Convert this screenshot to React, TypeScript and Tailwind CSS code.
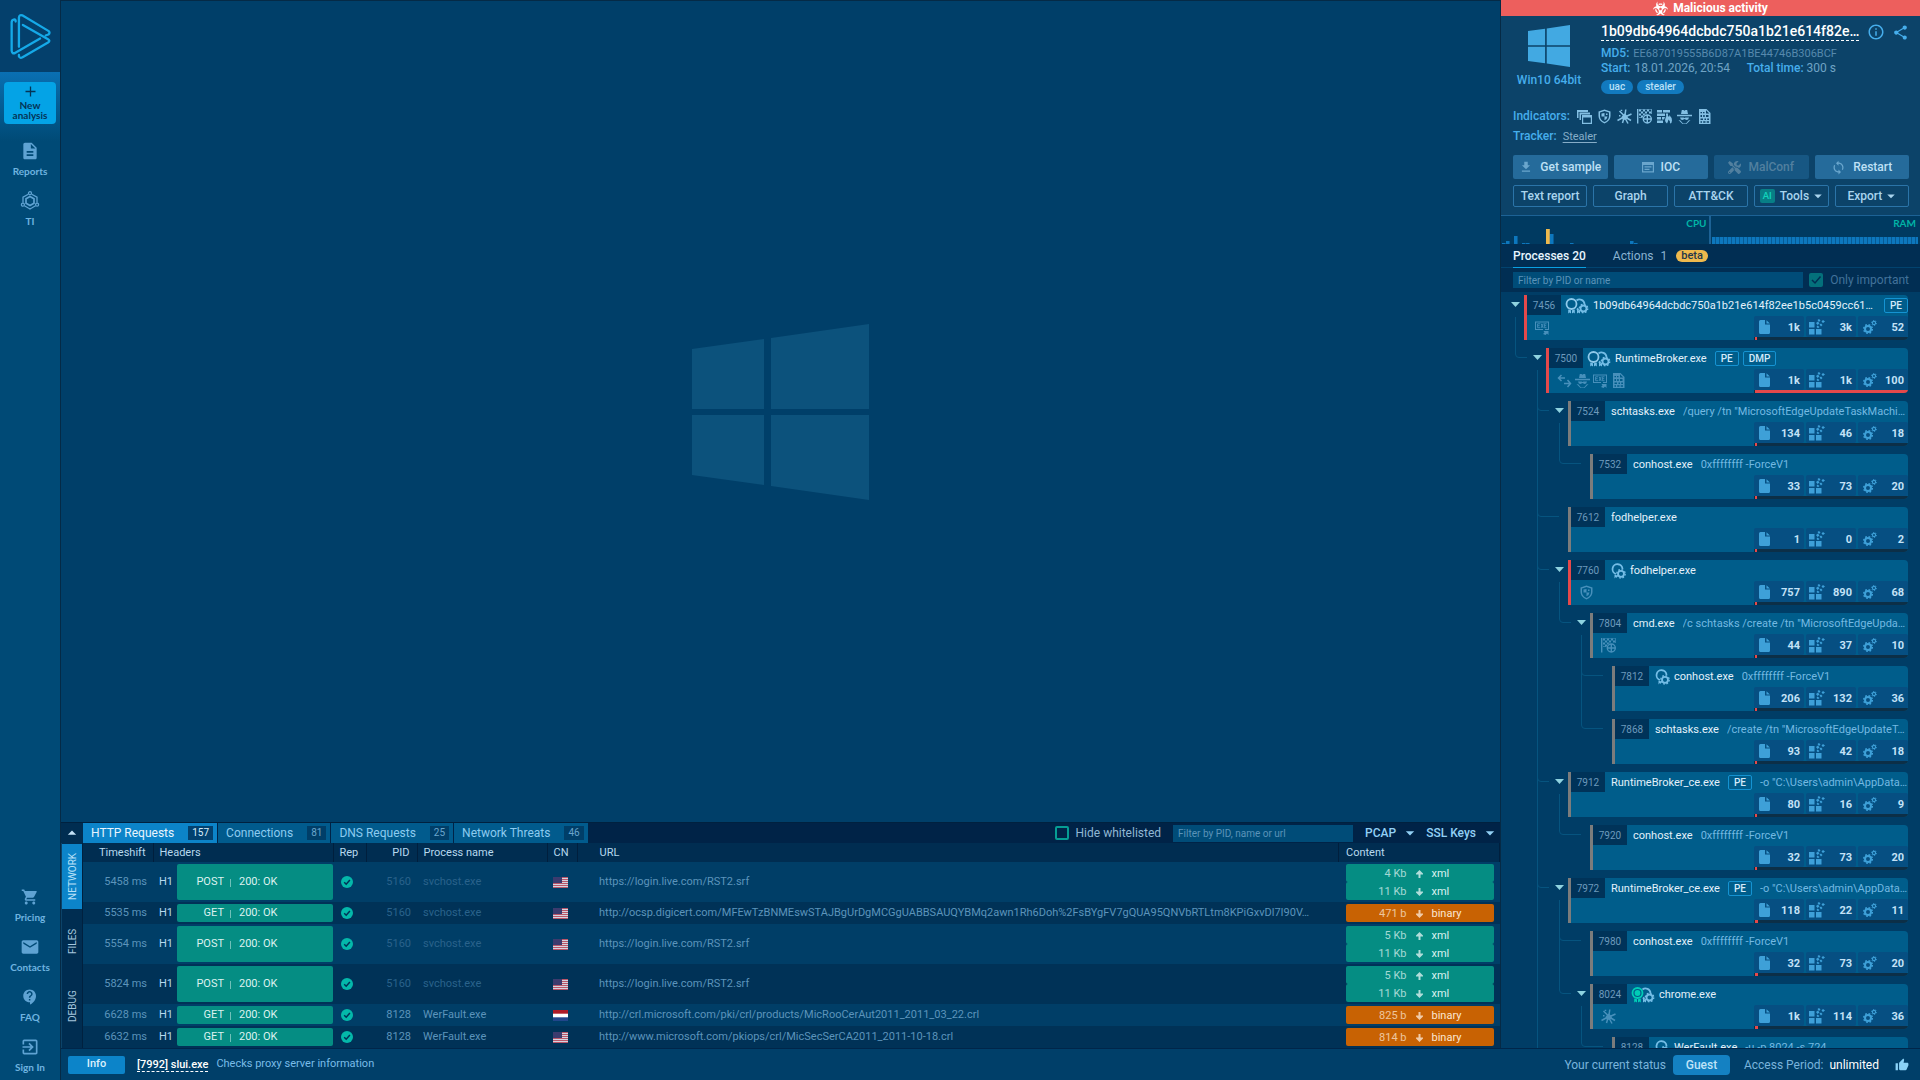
import type { ReactNode } from 'react';
import {
  MdArrowDropDown,
  MdArrowDropUp,
  MdContactSupport,
  MdDescription,
  MdEmail,
  MdExitToApp,
  MdFileDownload,
  MdInfoOutline,
  MdShare,
  MdShoppingCart,
  MdSync,
  MdThumbUp,
} from 'react-icons/md';
import { FaBiohazard, FaTools } from 'react-icons/fa';

type Guide = 'blank' | 'line' | 'tee' | 'end';
type Indicator = 'exe' | 'net' | 'spy' | 'doc' | 'shield' | 'task' | 'crash';

interface Process {
  pid: number;
  name: string;
  guides: Guide[];
  stats: [string, string, string];
  load: number;
  open?: boolean;
  danger?: boolean;
  badge?: 'gear' | 'cert' | 'trusted';
  tags?: string[];
  args?: string;
  indicators?: Indicator[];
}

const processes: Process[] = [
  { pid: 7456, name: '1b09db64964dcbdc750a1b21e614f82ee1b5c0459cc61…', guides: [], stats: ['1k', '3k', '52'], load: 1, open: true, danger: true, badge: 'cert', tags: ['PE'], indicators: ['exe'] },
  { pid: 7500, name: 'RuntimeBroker.exe', guides: ['end'], stats: ['1k', '1k', '100'], load: 100, open: true, danger: true, badge: 'cert', tags: ['PE', 'DMP'], indicators: ['net', 'spy', 'exe', 'doc'] },
  { pid: 7524, name: 'schtasks.exe', guides: ['blank', 'tee'], stats: ['134', '46', '18'], load: 1, open: true, args: '/query /tn "MicrosoftEdgeUpdateTaskMachi…' },
  { pid: 7532, name: 'conhost.exe', guides: ['blank', 'line', 'end'], stats: ['33', '73', '20'], load: 1, args: '0xffffffff -ForceV1' },
  { pid: 7612, name: 'fodhelper.exe', guides: ['blank', 'tee'], stats: ['1', '0', '2'], load: 1 },
  { pid: 7760, name: 'fodhelper.exe', guides: ['blank', 'tee'], stats: ['757', '890', '68'], load: 1, open: true, danger: true, badge: 'gear', indicators: ['shield'] },
  { pid: 7804, name: 'cmd.exe', guides: ['blank', 'line', 'end'], stats: ['44', '37', '10'], load: 1, open: true, args: '/c schtasks /create /tn "MicrosoftEdgeUpda…', indicators: ['task'] },
  { pid: 7812, name: 'conhost.exe', guides: ['blank', 'line', 'blank', 'tee'], stats: ['206', '132', '36'], load: 1, badge: 'gear', args: '0xffffffff -ForceV1' },
  { pid: 7868, name: 'schtasks.exe', guides: ['blank', 'line', 'blank', 'end'], stats: ['93', '42', '18'], load: 1, args: '/create /tn "MicrosoftEdgeUpdateT…' },
  { pid: 7912, name: 'RuntimeBroker_ce.exe', guides: ['blank', 'tee'], stats: ['80', '16', '9'], load: 1, open: true, tags: ['PE'], args: '-o "C:\\Users\\admin\\AppData…' },
  { pid: 7920, name: 'conhost.exe', guides: ['blank', 'line', 'end'], stats: ['32', '73', '20'], load: 1, args: '0xffffffff -ForceV1' },
  { pid: 7972, name: 'RuntimeBroker_ce.exe', guides: ['blank', 'tee'], stats: ['118', '22', '11'], load: 2, open: true, tags: ['PE'], args: '-o "C:\\Users\\admin\\AppData…' },
  { pid: 7980, name: 'conhost.exe', guides: ['blank', 'line', 'tee'], stats: ['32', '73', '20'], load: 2, args: '0xffffffff -ForceV1' },
  { pid: 8024, name: 'chrome.exe', guides: ['blank', 'line', 'end'], stats: ['1k', '114', '36'], load: 2, open: true, badge: 'trusted', indicators: ['crash'] },
  { pid: 8128, name: 'WerFault.exe', guides: ['blank', 'line', 'blank', 'end'], stats: ['12', '64', '20'], load: 1, badge: 'gear', args: '-u -p 8024 -s 724' },
];

interface HttpRequest {
  time: string;
  method: string;
  pid: number;
  process: string;
  country: 'us' | 'nl';
  url: string;
  content: { size: string; up?: boolean; type: 'xml' | 'binary' }[];
}

const xml = (size: string): HttpRequest['content'] => [
  { size, up: true, type: 'xml' },
  { size: '11 Kb', type: 'xml' },
];

const requests: HttpRequest[] = [
  { time: '5458 ms', method: 'POST', pid: 5160, process: 'svchost.exe', country: 'us', url: 'https://login.live.com/RST2.srf', content: xml('4 Kb') },
  { time: '5535 ms', method: 'GET', pid: 5160, process: 'svchost.exe', country: 'us', url: 'http://ocsp.digicert.com/MFEwTzBNMEswSTAJBgUrDgMCGgUABBSAUQYBMq2awn1Rh6Doh%2FsBYgFV7gQUA95QNVbRTLtm8KPiGxvDl7I90V…', content: [{ size: '471 b', type: 'binary' }] },
  { time: '5554 ms', method: 'POST', pid: 5160, process: 'svchost.exe', country: 'us', url: 'https://login.live.com/RST2.srf', content: xml('5 Kb') },
  { time: '5824 ms', method: 'POST', pid: 5160, process: 'svchost.exe', country: 'us', url: 'https://login.live.com/RST2.srf', content: xml('5 Kb') },
  { time: '6628 ms', method: 'GET', pid: 8128, process: 'WerFault.exe', country: 'nl', url: 'http://crl.microsoft.com/pki/crl/products/MicRooCerAut2011_2011_03_22.crl', content: [{ size: '825 b', type: 'binary' }] },
  { time: '6632 ms', method: 'GET', pid: 8128, process: 'WerFault.exe', country: 'us', url: 'http://www.microsoft.com/pkiops/crl/MicSecSerCA2011_2011-10-18.crl', content: [{ size: '814 b', type: 'binary' }] },
];

// one sample every 4px
const cpu = [1, 3, 0, 8, 0, 1, 1, 0, 0, 0, 0, 15, 10, 0, 0, 0, 0, 1, 0, 0, 0, 0, 0, 0, 0, 0, 0, 0, 0, 0, 0, 0, 3, 1];
const ram = Array.from({ length: 52 }, () => 7);

function WindowsLogo({ className }: { className: string }) {
  return (
    <svg viewBox="0 0 177 176" className={className} fill="currentColor" aria-hidden="true">
      <path d="M0 25L72 15V85H0zM79 14L177 0V85H79zM0 91H72V161L0 151zM79 91H177V176L79 162z" />
    </svg>
  );
}

function Logo() {
  return (
    <svg viewBox="30 36 124 142" className="h-[47px] w-[41px]" fill="none" stroke="#15a9e8" strokeWidth="7" strokeLinecap="round" strokeLinejoin="round" aria-hidden="true">
      <path d="M47 62V59Q46 54 41 56Q35 57 35 65V150Q36 160 45 157L121 113" />
      <path d="M57 138V50Q58 40 67 43L146 90Q153 96 146 101L138 104" />
      <path d="M69 72L145 115Q153 120 145 125L68 170Q60 174 57 167V163" />
    </svg>
  );
}

function ThreatIntelIcon() {
  return (
    <svg viewBox="0 0 20 20" className="size-5" fill="none" stroke="currentColor" strokeWidth="1.300" aria-hidden="true">
      <path d="M10 5.500L14 7.800V12.300L10 14.600L6 12.300V7.800z" strokeWidth="1.700" />
      <path d="M8.300 3.200L3 6.200V11.800M11.700 3.200L17 6.200V11.800M4.400 14.800L8.300 17M15.600 14.800L11.700 17" />
      <circle cx="10" cy="2.200" r="1.500" />
      <circle cx="2.900" cy="13.700" r="1.500" />
      <circle cx="17.100" cy="13.700" r="1.500" />
      <path d="M8.300 17L10 18L11.700 17" />
    </svg>
  );
}

function IndicatorIcon({ kind }: { kind: Indicator | 'windows' | 'firewall' }) {
  const shapes: Record<string, ReactNode> = {
    windows: <path d="M0 1H11V3H1.500V9H0zM2.500 3.500H13V5.500H4V11H2.500zM5 6H15V15H5zM6.200 8.500V13.800H13.800V8.500z" fillRule="evenodd" />,
    shield: (
      <>
        <path d="M7.500.500L13.500 2.500V7Q13.500 12 7.500 14.500Q1.500 12 1.500 7V2.500zM7.500 2L3 3.500V7Q3 11 7.500 13Q12 11 12 7V3.500z" fillRule="evenodd" />
        <path d="M7.500 4V7.500H4.500V4.500zM7.500 7.500H10.500Q10.300 10 7.500 11.200z" />
        <path d="M9 4.500h1.500v1.500h-1.500z" />
      </>
    ),
    crash: (
      <>
        <path d="M7.500 4.500L9.500 6L11 8.500L9 10.500L6 11L4.500 8L6 6z" />
        <path d="M7.500 7L2.500 2M8 6L8.800.500M9 7.500L14.500 5M9 8.500L14 11.500M8 9L11 14.500M7 9L5.500 14M6 8.500L.500 11.500M2 6.800H3.500M4.500.800V2" fill="none" stroke="currentColor" strokeWidth="1.500" />
      </>
    ),
    task: (
      <>
        <path d="M0 0H1.400V14.500H0zM2 .500H4V2.500H2zM6 .500H8V2.500H6zM10 .500H12V2.500H10zM4 2.500H6V4.500H4zM8 2.500H10V4.500H8zM12 2.500H14V4.500H12zM2 4.500H4V6.500H2zM6 4.500H8V5.500L6.500 6.500H6zM4 6.500H6V8.500H4z" />
        <path d="M2 .200H14.500V5M2 8.500H5" fill="none" stroke="currentColor" strokeWidth=".7" />
        <circle cx="10.300" cy="10" r="4" fill="none" stroke="currentColor" strokeWidth="1.400" />
        <path d="M9.600 6H11V14H9.600zM6 9.300H14.500V10.700H6z" />
      </>
    ),
    firewall: (
      <>
        <path d="M0 1H5V3.500H0zM6 1H13V3.500H6zM0 4.500H8V7H0zM9 4.500H11V6L9 7zM0 8H4V10.500H0zM5 8H8L7 10.500H5zM0 11.500H6V14H0z" />
        <path d="M10.500 5Q11 7.500 12 8Q12.500 7 12.300 6Q15 8.500 15 11.500Q15 14 13 14.500Q13.500 12 11.500 10.500Q11 12.500 10 14.500Q8 13.500 8 11Q8.500 8 10.500 5z" />
      </>
    ),
    spy: (
      <>
        <path d="M4 5L4.800 1H6.500L7.500 1.700L8.500 1H10.200L11 5zM0 5.800H15V7.200H0z" />
        <path d="M3 8.500H6.500L7.500 9L8.500 8.500H12Q11.500 11 9.500 11L7.500 10L5.500 11Q3.500 11 3 8.500zM1.500 11L3.500 11.500L6 14.500H9L11.500 11.500L13.500 11L9.500 15H5.500z" />
      </>
    ),
    doc: <path d="M2 0H9.500L13.500 4V15H2zM9 1.200V4.500H12.300zM3.500 3H5V4.200H3.500zM6 3H7.500V4.200H6zM3.500 6H5V8H3.500zM6.200 6H7.700V8H6.200zM9 6H11.500V8H9zM3.500 9.500H6V11H3.500zM7.500 9.500H9V11H7.500zM10.200 9.500H12V11H10.200zM3.500 12.300H5V13.800H3.500zM6.200 12.300H8.500V13.800H6.200zM9.700 12.300H12V13.800H9.700z" fillRule="evenodd" />,
    exe: (
      <>
        <path d="M0 1.500H14V10H10V9H13V2.500H1V9H8V10H0z" />
        <path d="M5 3.800H2.600V7.700H5M2.600 5.700H4.600M6 3.500L8.200 8M8.200 3.500L6 8M11.500 3.800H9.300V7.700H11.500M9.300 5.700H11.200" fill="none" stroke="currentColor" strokeWidth=".9" />
        <path d="M8 14L9.500 12.500L8.500 11H13.500V15L12 13.500L10.500 15z" />
      </>
    ),
    net: <path d="M4.500 2L1.500 5L4.500 8M1.500 5H8M10.500 7L13.500 10.500L10.500 14M13.500 10.500H7" fill="none" stroke="currentColor" strokeWidth="1.500" />,
  };
  return (
    <svg viewBox="0 0 15 15" className="size-[15px] shrink-0" fill="currentColor" aria-hidden="true">
      {shapes[kind]}
    </svg>
  );
}

function BadgeIcon({ kind }: { kind: 'gear' | 'cert' | 'trusted' }) {
  if (kind === 'gear') {
    return (
      <svg viewBox="0 0 15 16" className="h-4 w-[15px] shrink-0" aria-hidden="true">
        <path d="M5 11A5 5 0 1 1 11.500 6" fill="none" stroke="#74bde6" strokeWidth="1.800" />
        <path d="M3.500 11.500L6 12.500V15L4.800 14L3.500 15.500z" fill="#74bde6" />
        <circle cx="10" cy="10.800" r="3" fill="none" stroke="#74bde6" strokeWidth="1.800" />
        <circle cx="10" cy="10.800" r="4.200" fill="none" stroke="#74bde6" strokeWidth="1.400" strokeDasharray="1.650 1.650" />
      </svg>
    );
  }
  const trusted = kind === 'trusted';
  return (
    <svg viewBox="0 0 24 16" className="h-4 w-6 shrink-0" aria-hidden="true">
      <g fill={trusted ? '#00cdb6' : '#74bde6'}>
        <circle cx="6.500" cy="6" r="5" fill="none" stroke={trusted ? '#00cdb6' : '#8ec9ea'} strokeWidth="1.800" />
        {trusted && <circle cx="6.500" cy="6" r="2.900" />}
        <path d="M3.200 11.500L6 12.300V15.500L4.600 14.500L3.200 15.500zM9.800 11.500L7 12.300V15.500L8.400 14.500L9.800 15.500z" />
      </g>
      <path d="M11.500 2.500A5 5 0 0 1 19.500 6M12 10.500L13.500 12" fill="none" stroke="#74bde6" strokeWidth="1.800" />
      <path d="M12 11.500L15 13V15.500L13.500 14.500L12 15.500z" fill="#74bde6" />
      <circle cx="18.500" cy="10.500" r="3" fill="none" stroke="#74bde6" strokeWidth="1.800" />
      <circle cx="18.500" cy="10.500" r="4.200" fill="none" stroke="#74bde6" strokeWidth="1.400" strokeDasharray="1.650 1.650" />
    </svg>
  );
}

function FileIcon() {
  return (
    <svg viewBox="0 0 11 14" className="h-3.5 w-[11px]" fill="currentColor" aria-hidden="true">
      <path d="M1.500 0H6V4.500H11V12.500Q11 14 9.500 14H1.500Q0 14 0 12.500V1.500Q0 0 1.500 0zM7.500.200L10.900 3.500H7.500z" />
    </svg>
  );
}

function ModulesIcon() {
  return (
    <svg viewBox="0 0 16 16" className="-ml-0.5 size-4" fill="currentColor" aria-hidden="true">
      <path d="M0 3H5.500V8.500H0zM0 10H5.500V15.500H0zM7 10H12.500V15.500H7z" />
      <path d="M7 4L9 2.500L10.500 4.500L8.500 6zM8.500 1L10 0L11.500 1.500L10 3zM12.500 2.500L14 1L16 2.500L14 4zM10.500 5.500L12 4.500L13.500 6L12 7.500zM8.500 6.500L10.500 8L9 9.300L7.500 8z" />
    </svg>
  );
}

function GearsIcon() {
  return (
    <svg viewBox="0 0 14 14" className="size-3.5" aria-hidden="true" fill="none" stroke="currentColor">
      <circle cx="5" cy="9" r="3" strokeWidth="2" />
      <circle cx="5" cy="9" r="4.300" strokeWidth="1.500" strokeDasharray="1.700 1.680" />
      <circle cx="11" cy="3" r="1.600" strokeWidth="1.100" />
      <circle cx="11" cy="3" r="2.500" strokeWidth=".9" strokeDasharray="1.300 1.300" />
    </svg>
  );
}

function GuideCell({ kind, leaf }: { kind: Guide; leaf: boolean }) {
  const reach = leaf ? 26 : 16;
  return (
    <svg viewBox="0 0 22 53" className="h-[53px] w-[22px] shrink-0 overflow-visible" fill="none" stroke="#06547f" aria-hidden="true">
      {(kind === 'line' || kind === 'tee') && <path d="M4.500 0V53" />}
      {(kind === 'tee' || kind === 'end') && <path d={`M4.500 0V6Q4.500 9.500 8 9.500H${reach}`} />}
    </svg>
  );
}

function Stat({ icon, value }: { icon: ReactNode; value: string }) {
  return (
    <div className="flex h-[21px] flex-1 items-center justify-between rounded-xs bg-[#064f82] pr-1 pl-[5px] text-[11px] font-bold text-[#c3e2f7]">
      <span className="text-[#3ea0d8]">{icon}</span>
      <span className="pt-[3px]">{value}</span>
    </div>
  );
}

function ProcessRow({ process }: { process: Process }) {
  const { pid, name, guides, stats, load, open, danger, badge, tags, args, indicators } = process;
  return (
    <li className="flex h-[53px] shrink-0">
      {guides.map((kind, i) => (
        <GuideCell key={i} kind={kind} leaf={!open && i === guides.length - 1} />
      ))}
      <div className="w-[13px] shrink-0">
        {open && (
          <>
            <button type="button" aria-label={`Collapse ${pid}`} className="block h-[22px] w-[9px] pb-[3px]">
              <svg viewBox="0 0 9 5" className="h-[5px] w-[9px]" fill="#8fd3e0"><path d="M0 0H9L4.500 5z" /></svg>
            </button>
            <div className="ml-1 h-[31px] w-px bg-[#06547f]" />
          </>
        )}
      </div>
      <div className={`flex h-[45px] min-w-0 flex-1 flex-col overflow-hidden rounded-r-sm border-l-[3px] bg-[#005d8b] ${danger ? 'border-[#e6494b]' : 'border-[#7c7c7c]'}`}>
        <div className="flex h-5 items-center">
          <span className="flex h-5 w-[34px] shrink-0 items-center justify-center bg-[#003359] pt-px text-[10px] text-[#6d9abc]">{pid}</span>
          {badge && <span className={badge === 'gear' ? 'ml-1.5 shrink-0 pt-0.5' : 'ml-1 shrink-0 pt-0.5'}><BadgeIcon kind={badge} /></span>}
          <span className={`shrink-0 pt-[3px] text-[11px] text-[#e3f1fb] ${badge ? 'ml-1' : 'ml-1.5'}`}>{name}</span>
          {tags && (
            <span className={`flex shrink-0 gap-1 pt-px pl-2 ${guides.length ? '' : 'ml-auto'}`}>
              {tags.map((tag) => (
                <span key={tag} className="rounded-xs border border-[#1593d2] px-[5px] text-[10px] leading-[13px] font-medium text-[#d3eafa]">{tag}</span>
              ))}
            </span>
          )}
          {args && <span className="ml-2 min-w-0 overflow-hidden pt-[3px] text-[11px] whitespace-nowrap text-[#73b9e2]">{args}</span>}
        </div>
        <div className="flex h-[25px] items-end justify-between">
          <div className="flex h-[25px] items-center gap-[3px] pl-2 text-[#4790bb]">
            {indicators?.map((kind) => <IndicatorIcon key={kind} kind={kind} />)}
          </div>
          <div className="w-[154px] shrink-0">
            <div className="flex gap-0.5">
              <Stat icon={<FileIcon />} value={stats[0]} />
              <Stat icon={<ModulesIcon />} value={stats[1]} />
              <Stat icon={<GearsIcon />} value={stats[2]} />
            </div>
            <div className="h-[3px] bg-[#0c2f47] pl-px">
              <div className="h-full bg-[#e6494b]" style={{ width: `${load}%` }} />
            </div>
          </div>
        </div>
      </div>
    </li>
  );
}

function Flag({ country }: { country: 'us' | 'nl' }) {
  return country === 'nl' ? (
    <svg viewBox="0 0 15 11" className="h-[11px] w-[15px]" role="img" aria-label="Netherlands">
      <path fill="#fff" d="M0 0H15V11H0z" /><path fill="#ae1c28" d="M0 0H15V3.700H0z" /><path fill="#21468b" d="M0 7.300H15V11H0z" />
    </svg>
  ) : (
    <svg viewBox="0 0 15 11" className="h-[11px] w-[15px]" role="img" aria-label="United States">
      <path fill="#d5d3e0" d="M0 0H15V11H0z" />
      <path stroke="#b5475b" strokeWidth=".9" d="M0 .500H15M0 2.500H15M0 4.500H15M0 6.500H15M0 8.500H15M0 10.500H15" />
      <path fill="#3c3b6e" d="M0 0H9V6H0z" />
    </svg>
  );
}

function Arrow({ up }: { up?: boolean }) {
  return (
    <svg viewBox="0 0 7 8" className={`h-2 w-[7px] ${up ? '' : 'rotate-180'}`} fill="currentColor" aria-hidden="true">
      <path d="M3.500 0L7 3.500V4.500H4.500V8H2.500V4.500H0V3.500z" />
    </svg>
  );
}

function SideLink({ icon, label }: { icon: ReactNode; label: string }) {
  return (
    <a href="#" className="flex h-[50px] flex-col items-center gap-1 text-[#6fb4e0]">
      <span className="flex h-5 items-center text-[#5fa3d3]">{icon}</span>
      <span className="font-[family-name:Lato,sans-serif] text-[10px] leading-3 font-bold">{label}</span>
    </a>
  );
}

function Sidebar() {
  return (
    <nav className="flex w-[61px] shrink-0 flex-col border-r border-[#052a46] bg-[#004a76]">
      <a href="#" aria-label="Home" className="flex h-[72px] items-center justify-center bg-[#04406c]">
        <Logo />
      </a>
      <div className="h-[69px] bg-linear-to-b from-[#0a70b3] to-[#004a76] px-1 pt-2.5">
        <button type="button" className="flex h-[42px] w-full flex-col items-center rounded bg-[#04a3e6] pt-1 font-[family-name:Lato,sans-serif] text-[10px] leading-[10px] font-bold text-[#053456]">
          <svg viewBox="0 0 11 11" className="mb-[3px] size-[11px] shrink-0" stroke="currentColor" strokeWidth="1.300"><path d="M5.500.500V10.500M.500 5.500H10.500" /></svg>
          <span>New<br />analysis</span>
        </button>
      </div>
      <SideLink icon={<MdDescription className="size-5" />} label="Reports" />
      <SideLink icon={<ThreatIntelIcon />} label="TI" />
      <div className="flex-1" />
      <SideLink icon={<MdShoppingCart className="size-[18px]" />} label="Pricing" />
      <SideLink icon={<MdEmail className="size-5" />} label="Contacts" />
      <SideLink icon={<MdContactSupport className="size-[18px]" />} label="FAQ" />
      <div className="h-[43px]">
        <SideLink icon={<MdExitToApp className="size-5" />} label="Sign In" />
      </div>
    </nav>
  );
}

const networkTabs = [
  { label: 'HTTP Requests', count: 157 },
  { label: 'Connections', count: 81 },
  { label: 'DNS Requests', count: 25 },
  { label: 'Network Threats', count: 46 },
];

function NetworkPanel() {
  return (
    <section className="shrink-0 border-t border-[#00213f] bg-[#002347]">
      <div className="flex h-5 items-stretch text-xs">
        <button type="button" aria-label="Expand panel" className="flex w-[22px] items-center justify-center bg-[#002d51] text-[#c3e2f7]">
          <MdArrowDropUp className="size-5" />
        </button>
        <div className="flex gap-px">
          {networkTabs.map((tab, i) => (
            <button key={tab.label} type="button" className={`flex items-center gap-3.5 pr-1 pl-2 ${i === 0 ? 'bg-[#0c84c9] text-[#e8f5fe]' : 'bg-[#015b8d] text-[#8ccbf0]'}`}>
              {tab.label}
              <span className={`flex h-3.5 min-w-[19px] items-center justify-center px-1 text-[10px] ${i === 0 ? 'bg-[#02416f] text-[#d8edfb]' : 'bg-[#003e68] text-[#6aa5cc]'}`}>{tab.count}</span>
            </button>
          ))}
        </div>
        <div className="ml-auto flex items-center">
          <label className="flex items-center gap-[7px] text-[#90b7d4]">
            <input type="checkbox" className="size-3.5 appearance-none rounded-xs border-2 border-[#069d94]" />
            Hide whitelisted
          </label>
          <input type="text" aria-label="Filter requests" placeholder="Filter by PID, name or url" className="ml-3 h-[17px] w-[180px] bg-[#004c78] px-[5px] text-[10px] text-[#c3e2f7] placeholder:text-[#5b93b8]" />
          <button type="button" className="ml-3 flex items-center gap-1 font-medium text-[#92d0f5]">
            PCAP <MdArrowDropDown className="size-5" />
          </button>
          <button type="button" className="ml-1.5 flex items-center gap-1 font-medium text-[#92d0f5]">
            SSL Keys <MdArrowDropDown className="size-5" />
          </button>
        </div>
      </div>
      <div className="flex">
        <div className="flex w-[22px] shrink-0 flex-col border-r border-l border-r-[#00213f] border-l-[#0c4369] bg-[#002d51] pt-px text-[10px]">
          {['NETWORK', 'FILES', 'DEBUG'].map((label, i) => (
            <button key={label} type="button" className={`flex h-[65px] rotate-180 items-center justify-center [writing-mode:vertical-rl] ${i === 0 ? 'bg-[#0c84c9] text-[#b7e0f8]' : 'text-[#a5c7de]'}`}>
              {label}
            </button>
          ))}
        </div>
        <table className="w-full table-fixed border-collapse text-left text-[11px]">
          <colgroup>
            <col className="w-[70px]" />
            <col className="w-[180px]" />
            <col className="w-[33px]" />
            <col className="w-[51px]" />
            <col className="w-[130px]" />
            <col className="w-[30px]" />
            <col />
            <col className="w-[161px]" />
          </colgroup>
          <thead>
            <tr className="h-[19px] bg-[#002d51] text-[#b7d9ee] [&>th]:border-r [&>th]:border-[#001f3d] [&>th]:p-0 [&>th]:pt-px [&>th]:font-normal">
              <th className="text-right"><span className="pr-[7px]">Timeshift</span></th>
              <th><span className="pl-1.5">Headers</span></th>
              <th><span className="pl-1.5">Rep</span></th>
              <th className="text-right"><span className="pr-[7px]">PID</span></th>
              <th><span className="pl-1.5">Process name</span></th>
              <th><span className="pl-1.5">CN</span></th>
              <th><span className="pl-[22px]">URL</span></th>
              <th><span className="pl-[7px]">Content</span></th>
            </tr>
          </thead>
          <tbody>
            {requests.map((r, i) => {
              const muted = r.pid === 5160;
              return (
                <tr key={r.time} className={`${r.content.length > 1 ? 'h-10' : 'h-[22px]'} ${i % 2 ? 'bg-[#003257]' : 'bg-[#003e67]'} text-[#5c94bb] [&>td]:p-0`}>
                  <td className="text-right"><span className="pr-1.5">{r.time}</span></td>
                  <td>
                    <div className="flex items-center pl-1.5">
                      <span className="w-[18px] text-[#b7d9ee]">H1</span>
                      <div className={`flex flex-1 items-center rounded-xs bg-[#058d83] pt-px text-[#dcf2f0] ${r.content.length > 1 ? 'h-9' : 'h-[18px]'}`}>
                        <span className="w-[47px] text-right">{r.method}</span>
                        <span className="mr-2 ml-1.5 h-2 w-px bg-[#6fc0b9]" />
                        <span>200: OK</span>
                      </div>
                    </div>
                  </td>
                  <td>
                    <svg viewBox="0 0 12 12" className="ml-2 size-3" role="img" aria-label="Whitelisted">
                      <circle cx="6" cy="6" r="6" fill="#04b8aa" />
                      <path d="M3.200 6.200L5.200 8.200L8.900 4" fill="none" stroke="#003257" strokeWidth="1.500" />
                    </svg>
                  </td>
                  <td className={muted ? 'text-right text-[#2a628b]' : 'text-right'}><span className="pr-1.5">{r.pid}</span></td>
                  <td className={muted ? 'text-[#2a628b]' : ''}><span className="pl-1.5">{r.process}</span></td>
                  <td><div className="pl-1.5"><Flag country={r.country} /></div></td>
                  <td><div className="overflow-hidden pl-[22px] whitespace-nowrap">{r.url}</div></td>
                  <td>
                    <div className="mr-1.5 pl-[7px]">
                      {r.content.map((c, n) => (
                        <div key={n} className={`flex h-[18px] items-center rounded-xs pt-0.5 ${c.type === 'xml' ? 'bg-[#058d83] text-[#dcf2f0]' : 'bg-[#c86203] text-[#fbe6d2]'}`}>
                          <span className="w-[61px] text-right opacity-75">{c.size}</span>
                          <span className="flex w-[25px] justify-center opacity-80"><Arrow up={c.up} /></span>
                          <span>{c.type}</span>
                        </div>
                      ))}
                    </div>
                  </td>
                </tr>
              );
            })}
          </tbody>
        </table>
      </div>
    </section>
  );
}

function Chart({ label, bars, peak }: { label: string; bars: number[]; peak?: number }) {
  return (
    <div className="flex h-7 flex-1 flex-col justify-between overflow-hidden">
      <span className="pt-px pr-0.5 text-right font-[family-name:Lato,sans-serif] text-[10px] leading-3 font-bold text-[#02b4a6]">{label}</span>
      <div className="flex h-[15px] items-end pl-px">
        {bars.map((value, i) => (
          <div
            key={i}
            className={`w-1 shrink-0 border-r ${i === peak ? 'border-[#b5a061] bg-[#eeb94d]' : 'border-[#075a94] bg-[#0d77bd]'}`}
            style={{ height: value }}
          />
        ))}
      </div>
    </div>
  );
}

function ReportPanel() {
  const action = 'flex h-6 flex-1 items-center justify-center gap-[7px] rounded-xs bg-[#256b9b] font-medium text-[#bfe0f5]';
  const outline = 'flex h-[22px] flex-1 items-center justify-center rounded-xs border border-[#2b74a8] font-medium text-[#a9d4ee]';
  return (
    <aside className="flex min-h-0 w-[420px] shrink-0 flex-col border-l border-[#062a45] bg-[#0c4369] text-xs">
      <div className="flex h-4 shrink-0 items-center justify-center gap-[5px] bg-[#ed5f5d] font-bold text-white">
        <FaBiohazard className="size-[15px]" />
        Malicious activity
      </div>
      <div className="flex pt-[7px] pr-[11px] pl-[15px] leading-[15px] text-[#46aeec]">
        <div className="flex w-[66px] shrink-0 flex-col items-center gap-1.5 pt-0.5">
          <WindowsLogo className="size-[42px] text-[#42a9e2]" />
          <span className="font-medium">Win10 64bit</span>
        </div>
        <div className="ml-[19px] min-w-0 flex-1">
          <div className="flex items-center">
            <h1 className="min-w-0 overflow-hidden border-b border-dashed border-white text-sm leading-[17px] font-medium whitespace-nowrap text-white">1b09db64964dcbdc750a1b21e614f82e…</h1>
            <button type="button" aria-label="Details" className="ml-auto"><MdInfoOutline className="size-[18px]" /></button>
            <button type="button" aria-label="Share" className="ml-[7px]"><MdShare className="size-[17px]" /></button>
          </div>
          <p className="mt-[5px] font-medium">MD5: <span className="ml-px text-[11px] font-normal text-[#5689ad]">EE687019555B6D87A1BE44746B306BCF</span></p>
          <p className="font-medium">
            Start: <span className="mr-3.5 ml-px font-normal text-[#6fa3c5]">18.01.2026, 20:54</span> Total time: <span className="font-normal text-[#6fa3c5]">300 s</span>
          </p>
          <div className="mt-1 flex gap-1 text-[10px] leading-[14px] font-medium text-[#b9e0f7]">
            <a href="#" className="rounded-full bg-[#127abf] px-2">uac</a>
            <a href="#" className="rounded-full bg-[#127abf] px-2">stealer</a>
          </div>
        </div>
      </div>
      <div className="flex h-[30px] items-end pl-3 leading-[15px] font-medium text-[#46aeec]">
        Indicators:
        <span className="ml-[7px] flex gap-[5px] text-[#83bfe3]">
          <IndicatorIcon kind="windows" />
          <IndicatorIcon kind="shield" />
          <IndicatorIcon kind="crash" />
          <IndicatorIcon kind="task" />
          <IndicatorIcon kind="firewall" />
          <IndicatorIcon kind="spy" />
          <IndicatorIcon kind="doc" />
        </span>
      </div>
      <p className="pt-[5px] pl-3 leading-[15px] font-medium text-[#46aeec]">
        Tracker: <a href="#" className="ml-[3px] text-[11px] font-normal text-[#86adc8] underline underline-offset-2">Stealer</a>
      </p>
      <div className="flex gap-1.5 pt-[11px] pr-[11px] pl-3">
        <button type="button" className={action}><MdFileDownload className="size-3.5 text-[#6aa6cd]" />Get sample</button>
        <button type="button" className={action}>
          <svg viewBox="0 0 12 12" className="size-3" fill="#6aa6cd" aria-hidden="true"><path d="M0 1H12V11.500H0zM1.200 4V10.300H10.800V4zM2.500 5.300H9.500V6.500H2.500zM2.500 7.700H7.500V8.900H2.500z" fillRule="evenodd" /></svg>
          IOC
        </button>
        <button type="button" disabled className="flex h-6 flex-1 items-center justify-center gap-[7px] rounded-xs bg-[#175783] font-medium text-[#52809f]"><FaTools className="size-[13px]" />MalConf</button>
        <button type="button" className={action}><MdSync className="size-[15px] text-[#6aa6cd]" />Restart</button>
      </div>
      <div className="mt-1.5 flex gap-1.5 pr-[11px] pl-3">
        <button type="button" className={outline}>Text report</button>
        <button type="button" className={outline}>Graph</button>
        <button type="button" className={outline}>ATT&amp;CK</button>
        <button type="button" className={outline}>
          <span className="mr-[5px] rounded-xs bg-[#087f86] px-[3px] font-[family-name:Lato,sans-serif] text-[9px] leading-[14px] font-bold text-[#12d3bc]">AI</span>
          Tools
          <MdArrowDropDown className="-mr-1 size-[18px]" />
        </button>
        <button type="button" className={outline}>Export<MdArrowDropDown className="-mr-1 size-[18px]" /></button>
      </div>
      <div className="mt-2 flex border-t border-[#1d6295] bg-[#003a61] pr-0.5">
        <Chart label="CPU" bars={cpu} peak={11} />
        <div className="w-0.5 bg-[#1d6295]" />
        <Chart label="RAM" bars={ram} />
      </div>
      <div className="flex h-6 shrink-0 items-stretch border-b border-[#02436f] bg-[#012e53] pl-3">
        <button type="button" className="-mb-px border-b border-[#0aa0e2] font-medium text-[#e8f5fe]">Processes 20</button>
        <button type="button" className="ml-[27px] flex items-center gap-[7px] text-[#8ab3d1]">
          Actions <span>1</span>
          <span className="ml-0.5 rounded-full bg-[#eeb94d] px-[5px] text-[11px] leading-3 font-medium text-[#23364a]">beta</span>
        </button>
      </div>
      <div className="flex h-6 shrink-0 items-center bg-[#012e53] pr-[11px] pl-3">
        <input type="text" aria-label="Filter processes" placeholder="Filter by PID or name" className="h-4 min-w-0 flex-1 bg-[#004c78] px-[5px] text-[10px] text-[#c3e2f7] placeholder:text-[#5b93b8]" />
        <label className="ml-1.5 flex items-center gap-[7px] text-[#42729a]">
          <span className="relative block size-3.5">
            <input type="checkbox" defaultChecked className="block size-3.5 appearance-none rounded-xs bg-[#04707b]" />
            <svg viewBox="0 0 14 14" className="pointer-events-none absolute inset-0 size-3.5" fill="none" stroke="#012e53" strokeWidth="1.500"><path d="M3 7L6 10L11.500 3.500" /></svg>
          </span>
          Only important
        </label>
      </div>
      <ul className="min-h-0 flex-1 overflow-hidden bg-[#003d66] pt-[3px] pr-3 pl-2.5">
        {processes.map((p) => <ProcessRow key={p.pid} process={p} />)}
      </ul>
    </aside>
  );
}

function StatusBar() {
  return (
    <footer className="flex h-8 shrink-0 items-center border-t border-[#00264a] bg-[#003f69] px-[7px] text-[11px]">
      <button type="button" className="h-[18px] w-[57px] rounded-xs bg-[#0c84c9] font-medium text-[#dcf1fd]">Info</button>
      <a href="#" className="ml-3 border-b border-dashed border-white leading-[13px] font-medium text-white">[7992] slui.exe</a>
      <span className="ml-2 text-[#79bce8]">Checks proxy server information</span>
      <div className="ml-auto flex items-center pr-1 text-xs text-[#79b4dc]">
        Your current status
        <button type="button" className="mr-3.5 ml-[7px] h-5 w-[57px] rounded-sm bg-[#1481c2] font-medium text-[#bfe3f8]">Guest</button>
        Access Period:
        <span className="ml-1.5 text-white">unlimited</span>
        <MdThumbUp className="ml-4 size-3.5 text-[#8bd3f8]" />
      </div>
    </footer>
  );
}

export default function App() {
  return (
    <div className="flex h-screen overflow-hidden bg-[#003f69] font-[family-name:Roboto,sans-serif]">
      <Sidebar />
      <div className="flex min-w-0 flex-1 flex-col">
        <div className="flex min-h-0 flex-1">
          <main className="flex min-w-0 flex-1 flex-col">
            <div className="flex min-h-0 flex-1 items-center justify-center border-t border-[#052a46]">
              <WindowsLogo className="w-[177px] text-[#0c527c]" />
            </div>
            <NetworkPanel />
          </main>
          <ReportPanel />
        </div>
        <StatusBar />
      </div>
    </div>
  );
}
